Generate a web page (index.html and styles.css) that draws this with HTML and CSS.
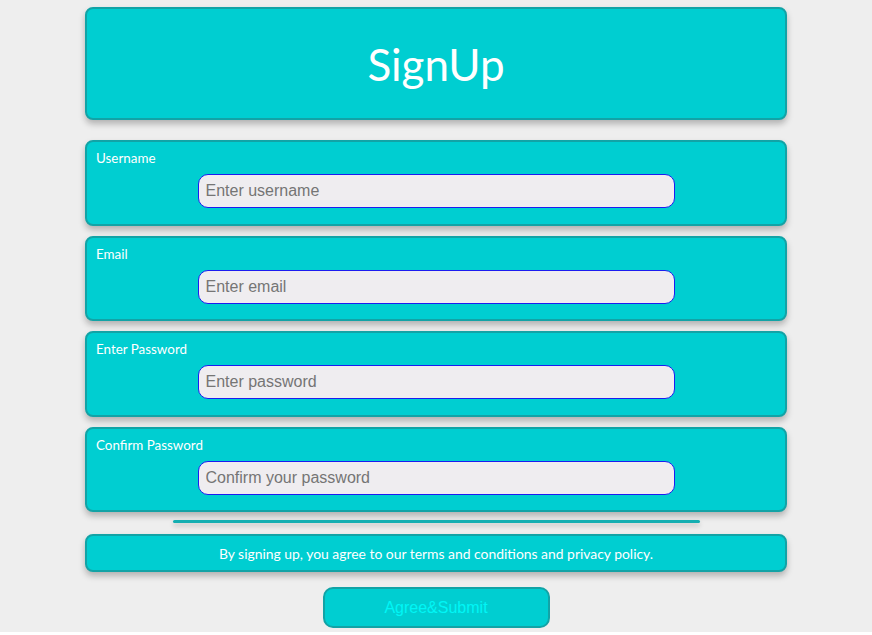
FILE: index.html
```html
<!DOCTYPE html>
<html lang="en">
<head>
<meta charset="utf-8">
<title>SignUp</title>
<link rel="stylesheet" href="styles.css">
</head>
<body>
  <main class="signup">
    <header class="card title-card">
      <h1 class="title">SignUp</h1>
    </header>

    <form class="signup-form" onsubmit="return false">
      <div class="card field">
        <label class="field-label" for="username">Username</label>
        <input class="field-input" id="username" type="text" placeholder="Enter username">
      </div>
      <div class="card field">
        <label class="field-label" for="email">Email</label>
        <input class="field-input" id="email" type="email" placeholder="Enter email">
      </div>
      <div class="card field">
        <label class="field-label" for="password">Enter Password</label>
        <input class="field-input" id="password" type="password" placeholder="Enter password">
      </div>
      <div class="card field">
        <label class="field-label" for="confirm">Confirm Password</label>
        <input class="field-input" id="confirm" type="password" placeholder="Confirm your password">
      </div>

      <hr class="divider">

      <p class="card terms">By signing up, you agree to our terms and conditions and privacy policy.</p>

      <div class="actions">
        <button class="submit" type="submit">Agree&amp;Submit</button>
      </div>
    </form>
  </main>
</body>
</html>
```

FILE: styles.css
```css
html {
  background: #ffffff;
}

body {
  margin: 0;
  padding: 7px 0 4px;
  background: #eeeeee;
  font-family: Lato, "Open Sans", sans-serif;
}

.signup {
  width: 702px;
  margin: 0 auto;
}

.card {
  box-sizing: border-box;
  background: #00ced1;
  border: 2px solid #12a3a6;
  border-radius: 8px;
  box-shadow: 0 4px 6px rgba(0, 0, 0, 0.25);
}

.title-card {
  height: 113px;
  display: flex;
  align-items: center;
  justify-content: center;
}

.title {
  margin: 0;
  color: #ffffff;
  font-size: 44px;
  font-weight: 400;
  line-height: 1;
}

.signup-form {
  margin-top: 20px;
  display: flex;
  flex-direction: column;
}

.field {
  height: 85.5px;
  padding: 8px 9px 0;
}

.field + .field {
  margin-top: 10px;
}

.field-label {
  display: block;
  color: #ffffff;
  font-size: 13.4px;
  line-height: 16px;
}

.field-input {
  display: block;
  box-sizing: border-box;
  width: 477px;
  height: 34px;
  margin: 8px auto 0;
  padding: 0 7px;
  background: #efedf0;
  border: 1px solid #1c1cf0;
  border-radius: 10px;
  font-family: "Liberation Sans", Arial, sans-serif;
  font-size: 16px;
  color: #333333;
  outline: none;
}

.field-input::placeholder {
  color: #757575;
}

.divider {
  box-sizing: border-box;
  width: 527px;
  height: 3px;
  margin: 8px auto 11px;
  border: none;
  border-radius: 2px;
  background: #13aeb1;
  box-shadow: 0 3px 5px rgba(0, 0, 0, 0.2);
}

.terms {
  height: 38px;
  margin: 0;
  display: flex;
  align-items: center;
  justify-content: center;
  color: #ffffff;
  font-size: 13.9px;
}

.actions {
  display: flex;
  justify-content: center;
  margin-top: 15px;
}

.submit {
  width: 227px;
  height: 41px;
  background: #00ced1;
  border: 2px solid #12a3a6;
  border-radius: 10px;
  color: #00f6f6;
  font-family: "Liberation Sans", Arial, sans-serif;
  font-size: 16px;
  cursor: pointer;
}
```
